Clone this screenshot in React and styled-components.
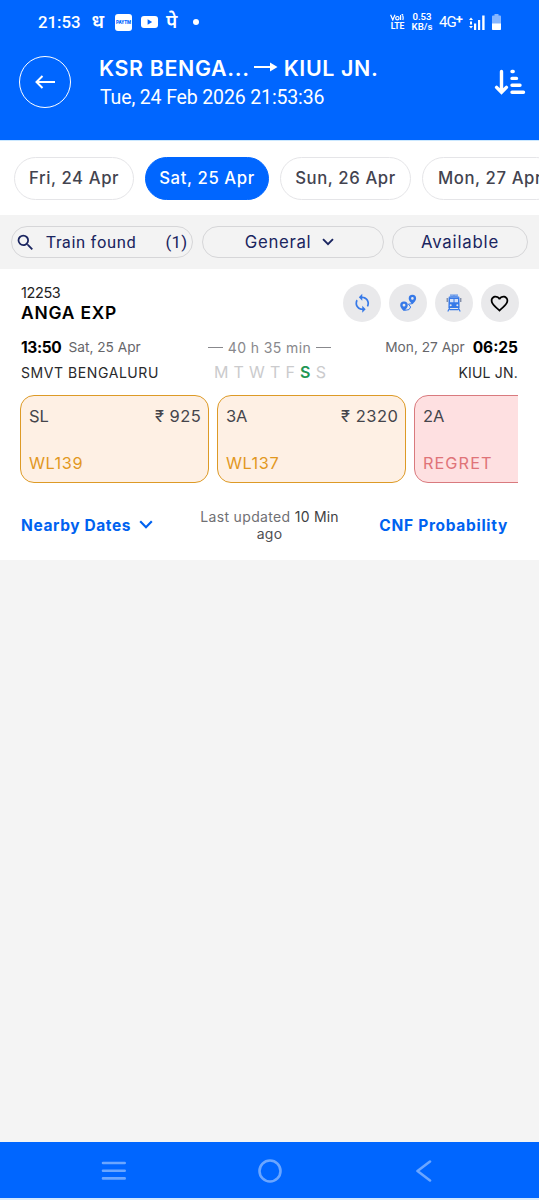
import React from 'react'
import styled, { createGlobalStyle } from 'styled-components'
import { MdFavoriteBorder, MdSearch, MdSync } from 'react-icons/md'

const GlobalStyle = createGlobalStyle`
  * { box-sizing: border-box; }
  body {
    margin: 0;
    background: #f4f4f4;
    font-family: Inter, "Liberation Sans", sans-serif;
    overflow: hidden;
  }
`

const Screen = styled.div`
  width: 539px;
  height: 1200px;
  display: flex;
  flex-direction: column;
  overflow: hidden;
`

const Label = styled.span`
  font-family: ${p => p.$font || 'inherit'};
  font-size: ${p => p.$size}px;
  font-weight: ${p => p.$weight || 400};
  letter-spacing: ${p => p.$spacing || 0}px;
  color: ${p => p.$color || 'inherit'};
  white-space: nowrap;
`

const Header = styled.header`
  height: 141px;
  flex: none;
  background: #0066ff;
  border-bottom: 1px solid #cbe8ff;
  color: #fff;
`

const StatusBar = styled.div`
  height: 44px;
  display: flex;
  align-items: center;
  justify-content: space-between;
  padding: 0 38px;
  font-family: Roboto, "Noto Sans", sans-serif;
`

const StatusGroup = styled.div`
  display: flex;
  align-items: center;
  gap: ${p => p.$gap}px;
`

const Clock = styled.span`
  width: 45px;
  font-size: 16.8px;
  font-weight: 500;
  line-height: 20px;
`

const AppGlyph = styled.span`
  width: ${p => p.$width}px;
  padding-top: 4px;
  font-family: "Noto Sans Devanagari", "Noto Sans", sans-serif;
  font-size: 19px;
  font-weight: 600;
  line-height: 20px;
`

const PaytmBadge = styled.span`
  width: 17px;
  height: 17px;
  border-radius: 3px;
  background: #fff;
  color: #0066ff;
  font-size: 4.6px;
  font-weight: 900;
  line-height: 17px;
  text-align: center;
`

const Dot = styled.span`
  width: 6px;
  height: 6px;
  border-radius: 50%;
  background: #fff;
`

const Stacked = styled.div`
  width: ${p => p.$width}px;
  font-size: ${p => p.$size}px;
  font-weight: ${p => p.$weight || 600};
  line-height: 10px;
  text-align: center;
  white-space: nowrap;
`

const VolteMark = styled.svg`
  display: block;
`

const Network = styled.span`
  width: 23px;
  font-size: 15px;
  line-height: 16px;
  letter-spacing: -0.9px;
  white-space: nowrap;

  & > b {
    font-size: 13px;
    position: relative;
    top: -3px;
  }
`

const TitleBar = styled.div`
  height: 76px;
  display: flex;
  align-items: center;
  padding: 0 13px 0 19px;
`

const BackButton = styled.button`
  width: 52px;
  height: 52px;
  padding: 0;
  border: 1.5px solid #fff;
  border-radius: 50%;
  background: none;
  display: flex;
  align-items: center;
  justify-content: center;
`

const Titles = styled.div`
  flex: 1;
  margin-left: 28px;
`

const Route = styled.div`
  height: 28px;
  display: flex;
  align-items: center;
  margin-top: 3px;
`

const RouteArrow = styled.svg`
  margin: -2px 6px 0 4px;
`

const Now = styled.div`
  height: 31px;
  line-height: 31px;
  padding-left: 1px;
`

const DateStrip = styled.nav`
  height: 74px;
  flex: none;
  background: #fff;
  display: flex;
  align-items: center;
  gap: 11px;
  padding-left: 14px;
  overflow: hidden;
`

const DateChip = styled.button`
  width: ${p => p.$width}px;
  height: 43px;
  flex: none;
  padding: 0;
  border-radius: 22px;
  border: 1.5px solid ${p => (p.$active ? '#0066ff' : '#e5e5e8')};
  background: ${p => (p.$active ? '#0066ff' : '#fff')};
  color: ${p => (p.$active ? '#fff' : '#43434f')};
  font-family: inherit;
`

const FilterBar = styled.div`
  height: 54px;
  flex: none;
  background: #f3f3f3;
  display: flex;
  align-items: center;
  gap: 8.5px;
  padding-left: 11px;
  color: #1a2560;
`

const FilterPill = styled.div`
  width: ${p => p.$width}px;
  height: 32px;
  border: 1.5px solid #d6d6d8;
  border-radius: 16px;
  display: flex;
  align-items: center;
  justify-content: center;
`

const SearchPill = styled(FilterPill)`
  justify-content: flex-start;
  gap: 10px;
  padding: 0 4.5px 0 3px;

  & > span:last-child { margin-left: auto; }
`

const SelectPill = styled(FilterPill)`
  gap: 11px;
  padding-right: 6px;
`

const TrainCard = styled.section`
  height: 291px;
  flex: none;
  background: #fff;
  padding: 14px 21px 0 21px;
  color: #000;
`

const TrainHead = styled.div`
  height: 40px;
  display: flex;
  justify-content: space-between;
`

const TrainName = styled.div`
  display: flex;
  flex-direction: column;
  line-height: 20px;
`

const Actions = styled.div`
  display: flex;
  gap: 7.8px;
  align-items: flex-start;
  margin: 1px -0.5px 0 0;
`

const ActionButton = styled.button`
  width: 38px;
  height: 38px;
  padding: 0;
  border: 0;
  border-radius: 50%;
  background: #e9e9eb;
  color: ${p => p.$color || '#3679e8'};
  display: flex;
  align-items: center;
  justify-content: center;
`

const Journey = styled.div`
  display: grid;
  grid-template-columns: 187px 123px 187px;
  grid-template-rows: 25px 25px;
  margin-top: 12px;
`

const Cell = styled.div`
  display: flex;
  align-items: center;
  justify-content: ${p => p.$align || 'flex-start'};
  gap: ${p => p.$gap || 0}px;
  line-height: 25px;
`

const Dash = styled.i`
  width: 15px;
  height: 1.5px;
  background: #88888c;
`

const Days = styled.div`
  width: 112px;
  display: flex;
  justify-content: space-between;
  margin-left: 6px;
  font-size: 16px;
  color: #cbcbcd;
`

const Day = styled.span`
  color: ${p => (p.$runs ? '#219653' : 'inherit')};
  font-weight: ${p => (p.$runs ? 600 : 400)};
`

const Fares = styled.div`
  display: flex;
  gap: 8px;
  margin: 10px 0 0 -0.6px;
  overflow: hidden;
`

const FareBox = styled.div`
  width: 189px;
  height: 88px;
  flex: none;
  display: flex;
  flex-direction: column;
  justify-content: space-between;
  padding: 10px 7px 9px 7.5px;
  border: 1.5px solid ${p => (p.$regret ? '#d97a7e' : '#dd9a26')};
  border-radius: 14px;
  background: ${p => (p.$regret ? '#fee0e1' : '#fef0e4')};
  color: ${p => (p.$regret ? '#e07378' : '#e2981f')};
  line-height: 20px;
`

const FareTop = styled.div`
  display: flex;
  justify-content: space-between;
  color: #45454b;
`

const CardFoot = styled.div`
  height: 84px;
  display: flex;
  align-items: center;
  justify-content: space-between;
  color: #0062f0;
`

const NearbyDates = styled.div`
  width: 172px;
  display: flex;
  align-items: center;
  gap: 8px;
`

const Updated = styled.div`
  width: 153px;
  text-align: center;
  line-height: 17px;
  color: #707074;
`

const Probability = styled.div`
  width: 172px;
  padding-right: 10px;
  text-align: right;
`

const Empty = styled.main`
  flex: 1;
`

const NavBar = styled.footer`
  height: 58px;
  flex: none;
  background: #0066ff;
  border-bottom: 2px solid #d5eaff;
  display: flex;
  align-items: center;
  justify-content: space-between;
  padding: 2px 107px 0 101px;
`

const fares = [
  { cls: 'SL', price: '₹ 925', status: 'WL139' },
  { cls: '3A', price: '₹ 2320', status: 'WL137' },
  { cls: '2A', status: 'REGRET', regret: true },
]

const dates = [
  { text: 'Fri, 24 Apr', width: 120 },
  { text: 'Sat, 25 Apr', width: 124, active: true },
  { text: 'Sun, 26 Apr', width: 131 },
  { text: 'Mon, 27 Apr', width: 136 },
]

const Chevron = ({ width }) => (
  <svg width={width} height={width * 0.65} viewBox="0 0 14 9" fill="none">
    <path d="M1.2 1.3L7 7.2L12.8 1.3" stroke="currentColor" strokeWidth="2.2" />
  </svg>
)

const RouteIcon = () => (
  <svg width="18" height="18" viewBox="0 0 18 18">
    <path
      fill="currentColor"
      fillRule="evenodd"
      d="M5 7.6A3.7 3.7 0 0 0 1.2 11.2C1.2 13.9 5 17 5 17S8.8 13.9 8.8 11.2A3.7 3.7 0 0 0 5 7.6ZM5 9.8A1.4 1.4 0 1 1 5 12.6A1.4 1.4 0 0 1 5 9.8ZM13.4 .8A3.7 3.7 0 0 0 9.7 4.5C9.7 7.1 13.4 10.2 13.4 10.2S17.1 7.1 17.1 4.5A3.7 3.7 0 0 0 13.4 .8ZM13.4 3.1A1.3 1.3 0 1 1 13.4 5.7A1.3 1.3 0 0 1 13.4 3.1Z"
    />
    <path d="M13 9.7L9.4 10.2L11.7 13L10 15.6L5.5 16.4" fill="none" stroke="currentColor" strokeWidth="1" />
  </svg>
)

const TrainIcon = () => (
  <svg width="16" height="18" viewBox="0 0 16 18">
    <path d="M4 1.2H12M8 1V3M3 3.3C5 1.9 11 1.9 13 3.3" fill="none" stroke="#5d92ea" strokeWidth="1.2" />
    <path d="M2.6 3.2H13.4L13.6 14H2.4Z" fill="#3679e8" />
    <path d="M4 5H7.5V8.2H4ZM8.5 5H12V8.2H8.5Z" fill="#d4e0f8" />
    <circle cx="4.7" cy="11.2" r="1" fill="#e9e9eb" />
    <circle cx="11.3" cy="11.2" r="1" fill="#e9e9eb" />
    <path d="M1.2 4V8M14.8 4V8" stroke="#5a6a8c" strokeWidth="1" />
    <path d="M3.8 13.5L1.8 17.5M12.2 13.5L14.2 17.5M3.5 15.6H12.5" fill="none" stroke="#3679e8" strokeWidth="1.1" />
  </svg>
)

const Status = () => (
  <StatusBar>
    <StatusGroup $gap={8.5}>
      <Clock>21:53</Clock>
      <AppGlyph $width={15}>ध</AppGlyph>
      <PaytmBadge>PAYTM</PaytmBadge>
      <svg width="17" height="12" viewBox="0 0 17 12">
        <rect width="17" height="12" rx="3" fill="#fff" />
        <path d="M6.6 3.3V8.7L11.2 6Z" fill="#0066ff" />
      </svg>
      <AppGlyph $width={18}>पे</AppGlyph>
      <Dot />
    </StatusGroup>
    <StatusGroup $gap={6.5}>
      <Stacked $width={15} $size={8}>
        <VolteMark width="15" height="7" viewBox="0 0 15 7" fill="none" stroke="#fff" strokeWidth="1.2">
          <path d="M.6 .8L2.8 6L5 .8M10.6 1V6M12.6 1.6Q13.6 3.6 12.8 6M11.6 0Q12.4 .4 13 1" />
          <circle cx="7.4" cy="4.2" r="1.7" />
        </VolteMark>
        <Label as="div" $size={8.6} $weight={700} $spacing={-0.1}>LTE</Label>
      </Stacked>
      <Stacked $width={21} $size={9.6}>0.53<br />KB/s</Stacked>
      <Network>4G<b>+</b></Network>
      <svg width="17" height="15" viewBox="0 0 17 15" fill="#fff">
        <path d="M0 5L2 2.5L4 5ZM0 11L2 13.5L4 11ZM1 6.5H3V9.5H1ZM5 8.5H7.2V15H5ZM9 5H11.2V15H9ZM13.2 .5H15.6V15H13.2Z" />
      </svg>
      <svg width="9" height="16" viewBox="0 0 9 16">
        <path d="M2.5 0H6.5V1.5H8Q9 1.5 9 2.5V15Q9 16 8 16H1Q0 16 0 15V2.5Q0 1.5 1 1.5H2.5Z" fill="#86b6ff" />
        <path d="M0 9.5H9V15Q9 16 8 16H1Q0 16 0 15Z" fill="#fff" />
      </svg>
    </StatusGroup>
  </StatusBar>
)

export const App = () => (
  <Screen>
    <GlobalStyle />
    <Header>
      <Status />
      <TitleBar>
        <BackButton>
          <svg width="20" height="14" viewBox="0 0 20 14" fill="none" stroke="#fff" strokeWidth="2">
            <path d="M20 7H1.5M7.5 1L1.5 7L7.5 13" />
          </svg>
        </BackButton>
        <Titles>
          <Route>
            <Label $size={21.4} $weight={600} $spacing={0.65}>KSR BENGA...</Label>
            <RouteArrow width="24" height="10" viewBox="0 0 24 10">
              <path d="M0 4H16V0.5L23.5 5L16 9.5V6H0Z" fill="#fff" />
            </RouteArrow>
            <Label $size={21.4} $weight={600} $spacing={0.65}>KIUL JN.</Label>
          </Route>
          <Now>
            <Label $font="Roboto, sans-serif" $size={19.5} $spacing={-0.14}>Tue, 24 Feb 2026 21:53:36</Label>
          </Now>
        </Titles>
        <svg width="32" height="26" viewBox="0 0 32 26" fill="none" stroke="#fff" strokeWidth="3.4" strokeLinecap="round">
          <path d="M7.5 2.5V22.5M2.6 18.4L7.5 23.3L12.4 18.4M18 2.5H19.2M18 9.4H22.5M18 16.3H26M18 23.3H29.5" />
        </svg>
      </TitleBar>
    </Header>

    <DateStrip>
      {dates.map(d => (
        <DateChip key={d.text} $width={d.width} $active={d.active}>
          <Label $size={16.7} $weight={500} $spacing={0.6}>{d.text}</Label>
        </DateChip>
      ))}
    </DateStrip>

    <FilterBar>
      <SearchPill $width={182}>
        <MdSearch size={21} />
        <Label $font="Roboto, sans-serif" $size={16.5} $spacing={0.65}>Train found</Label>
        <Label $font="Roboto, sans-serif" $size={17} $spacing={0.2}>(1)</Label>
      </SearchPill>
      <SelectPill $width={182}>
        <Label $size={16.8} $spacing={0.65}>General</Label>
        <Chevron width={12} />
      </SelectPill>
      <FilterPill $width={136}>
        <Label $size={16.8} $spacing={0.8}>Available</Label>
      </FilterPill>
    </FilterBar>

    <TrainCard>
      <TrainHead>
        <TrainName>
          <Label $size={14.5} $spacing={-0.4} $color="#222">12253</Label>
          <Label $size={17.4} $weight={600} $spacing={0.8}>ANGA EXP</Label>
        </TrainName>
        <Actions>
          <ActionButton><MdSync size={20.5} /></ActionButton>
          <ActionButton><RouteIcon /></ActionButton>
          <ActionButton><TrainIcon /></ActionButton>
          <ActionButton $color="#000"><MdFavoriteBorder size={21} /></ActionButton>
        </Actions>
      </TrainHead>

      <Journey>
        <Cell $gap={7}>
          <Label $size={15.5} $weight={700} $spacing={-0.35}>13:50</Label>
          <Label $size={13.7} $color="#66666a">Sat, 25 Apr</Label>
        </Cell>
        <Cell $align="space-between">
          <Dash />
          <Label $size={14} $spacing={0.4} $color="#88888c">40 h 35 min</Label>
          <Dash />
        </Cell>
        <Cell $gap={8} $align="flex-end">
          <Label $size={13.7} $color="#66666a">Mon, 27 Apr</Label>
          <Label $size={15.5} $weight={700}>06:25</Label>
        </Cell>
        <Cell><Label $size={14} $spacing={0.57} $color="#29292b">SMVT BENGALURU</Label></Cell>
        <Cell>
          <Days>
            {'MTWTFSS'.split('').map((d, i) => <Day key={i} $runs={i === 5}>{d}</Day>)}
          </Days>
        </Cell>
        <Cell $align="flex-end"><Label $size={14} $spacing={0.2} $color="#29292b">KIUL JN.</Label></Cell>
      </Journey>

      <Fares>
        {fares.map(f => (
          <FareBox key={f.cls} $regret={f.regret}>
            <FareTop>
              <Label $size={16.5}>{f.cls}</Label>
              {f.price && <Label $size={16.5} $spacing={0.5}>{f.price}</Label>}
            </FareTop>
            <Label $size={16.3} $spacing={f.regret ? 1.1 : 0.6}>{f.status}</Label>
          </FareBox>
        ))}
      </Fares>

      <CardFoot>
        <NearbyDates>
          <Label $size={15.5} $weight={700} $spacing={0.6}>Nearby Dates</Label>
          <Chevron width={14} />
        </NearbyDates>
        <Updated>
          <Label $size={14} $spacing={0.35}>Last updated <Label $size={14} $spacing={0.2} $color="#3f3f43">10 Min</Label></Label>
          <br />
          <Label $size={14} $spacing={0.3} $color="#4f4f53">ago</Label>
        </Updated>
        <Probability>
          <Label $size={15.5} $weight={700} $spacing={0.7}>CNF Probability</Label>
        </Probability>
      </CardFoot>
    </TrainCard>

    <Empty />

    <NavBar>
      <svg width="25" height="20" viewBox="0 0 25 20" stroke="#6ba6ff" strokeWidth="2.6" strokeLinecap="round">
        <path d="M2 2H23.7M2 9.7H23.7M2 17.4H23.7" />
      </svg>
      <svg width="26" height="24" viewBox="0 0 26 24" fill="none" stroke="#6ba6ff" strokeWidth="2.6">
        <circle cx="12" cy="12" r="10.5" />
      </svg>
      <svg width="17" height="22" viewBox="0 0 17 22" fill="none" stroke="#6ba6ff" strokeWidth="2.6" strokeLinecap="round" strokeLinejoin="round">
        <path d="M15 1.5L2.5 11L15 20.5" />
      </svg>
    </NavBar>
  </Screen>
)

export default App
